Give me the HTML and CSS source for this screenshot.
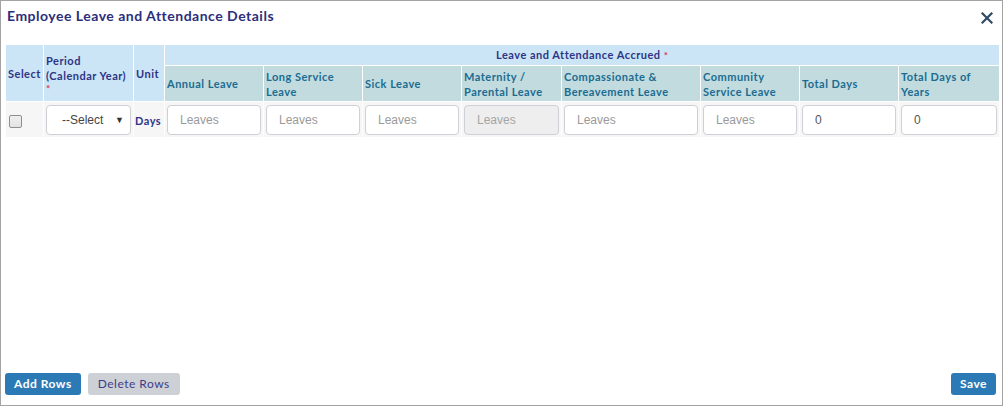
FILE: index.html
```html
<!DOCTYPE html>
<html lang="en">
<head>
<meta charset="utf-8">
<title>Employee Leave and Attendance Details</title>
<link rel="stylesheet" href="styles.css">
</head>
<body>
<div class="modal">
  <div class="modal-header">
    <h1 class="modal-title">Employee Leave and Attendance Details</h1>
    <button class="close" type="button" aria-label="Close">
      <svg width="12" height="12" viewBox="0 0 12 12"><path d="M1.5 1.5 L10.5 10.5 M10.5 1.5 L1.5 10.5" stroke="#2f4b63" stroke-width="2.2" stroke-linecap="square" fill="none"/></svg>
    </button>
  </div>
  <div class="modal-body">
    <table class="grid">
      <colgroup>
        <col class="c-select"><col class="c-period"><col class="c-unit">
        <col class="c-std"><col class="c-std"><col class="c-std"><col class="c-mat">
        <col class="c-comp"><col class="c-std"><col class="c-std"><col class="c-last">
      </colgroup>
      <thead>
        <tr class="head-top">
          <th rowspan="2" class="th-main">Select</th>
          <th rowspan="2" class="th-main">Period<br>(Calendar Year) <span class="req req-block">*</span></th>
          <th rowspan="2" class="th-main">Unit</th>
          <th colspan="8" class="th-main th-group">Leave and Attendance Accrued <span class="req">*</span></th>
        </tr>
        <tr class="head-sub">
          <th>Annual Leave</th>
          <th>Long Service Leave</th>
          <th>Sick Leave</th>
          <th>Maternity / Parental Leave</th>
          <th>Compassionate &amp; Bereavement Leave</th>
          <th>Community Service Leave</th>
          <th>Total Days</th>
          <th>Total Days of Years</th>
        </tr>
      </thead>
      <tbody>
        <tr class="data-row">
          <td class="td-check"><input type="checkbox" class="check"></td>
          <td><div class="select"><span>--Select</span><span class="arrow">&#9660;</span></div></td>
          <td class="td-unit">Days</td>
          <td><input class="field" placeholder="Leaves"></td>
          <td><input class="field" placeholder="Leaves"></td>
          <td><input class="field" placeholder="Leaves"></td>
          <td><input class="field field-disabled" placeholder="Leaves" disabled></td>
          <td><input class="field" placeholder="Leaves"></td>
          <td><input class="field" placeholder="Leaves"></td>
          <td><input class="field" value="0"></td>
          <td><input class="field" value="0"></td>
        </tr>
      </tbody>
    </table>
  </div>
  <div class="modal-footer">
    <div class="actions-left">
      <button class="btn btn-primary" type="button">Add Rows</button>
      <button class="btn btn-muted" type="button">Delete Rows</button>
    </div>
    <button class="btn btn-primary" type="button">Save</button>
  </div>
</div>
</body>
</html>
```

FILE: styles.css
```css
* { box-sizing: border-box; }
html, body { margin: 0; padding: 0; }
body {
  font-family: Lato, "Open Sans", Arial, sans-serif;
  background: #fff;
}
.modal {
  width: 1003px;
  height: 406px;
  border: 1px solid #a3a3a3;
  display: flex;
  flex-direction: column;
  background: #fff;
}
.modal-header {
  display: flex;
  justify-content: space-between;
  align-items: flex-start;
  padding: 5px 9px 0 6px;
  height: 43px;
}
.modal-title {
  margin: 0;
  font-size: 14px;
  line-height: 20px;
  font-weight: 700;
  color: #2c2e7c;
  letter-spacing: 0.5px;
}
.close {
  border: 0;
  background: none;
  padding: 0;
  margin-top: 6px;
  width: 12px;
  height: 12px;
  display: flex;
}
.modal-body {
  padding: 0 3px 0 4px;
  flex: 1;
}
.grid {
  width: 994px;
  table-layout: fixed;
  border-collapse: collapse;
}
.c-select { width: 38px; }
.c-period { width: 90px; }
.c-unit { width: 31px; }
.c-std { width: 99px; }
.c-mat { width: 100px; }
.c-comp { width: 139px; }
.c-last { width: 101px; }
.grid th, .grid td {
  border: 1px solid #fff;
  padding: 0 2px;
}
.grid th {
  font-size: 11px;
  line-height: 15px;
  font-weight: 700;
  text-align: left;
  vertical-align: middle;
  letter-spacing: 0.5px;
}
.head-top th { background: #cbe5f6; color: #2e3486; }
.head-top { height: 21px; }
.th-group { text-align: center !important; }
.head-sub th { background: #c1dbdf; color: #1b6c90; height: 36px; }
.req { color: #e0334b; font-size: 10px; letter-spacing: 0; }
.req-block { display: block; line-height: 10px; }
.data-row td {
  background: #f6f6f6;
  height: 36px;
  padding: 3px 2px 2px 2px;
  vertical-align: middle;
}
.td-check { padding-left: 2px !important; }
.check {
  appearance: none;
  -webkit-appearance: none;
  margin: 2px 0 0 1px;
  width: 13px;
  height: 13px;
  border: 1px solid #8f8f8f;
  border-radius: 2px;
  background: linear-gradient(#f0f0f0, #e2e2e2);
  display: block;
}
.td-unit {
  font-size: 11px;
  font-weight: 700;
  color: #2e3486;
  letter-spacing: 0.5px;
  padding-left: 1px !important;
}
.field, .select {
  width: 100%;
  height: 30px;
  border: 1px solid #cfcfd6;
  border-radius: 4px;
  background: #fff;
  font-family: "Liberation Sans", Arial, sans-serif;
  font-size: 12px;
  color: #555;
  padding: 0 12px;
  display: block;
}
.field::placeholder { color: #9a9a9a; }
.field-disabled { background: #eeeeee; }
.field-disabled::placeholder { color: #a5a5a5; }
.select {
  display: flex;
  align-items: center;
  justify-content: space-between;
  padding: 0 6px 0 15px;
  color: #444;
}
.arrow { font-size: 9px; color: #333; }
.modal-footer {
  display: flex;
  justify-content: space-between;
  align-items: center;
  padding: 0 6px 10px 4px;
}
.actions-left { display: flex; gap: 7px; }
.btn {
  height: 22px;
  border: 0;
  border-radius: 3px;
  font-family: Lato, Arial, sans-serif;
  font-size: 12px;
  padding: 0 9px;
  line-height: 22px;
  letter-spacing: 0.5px;
}
.btn-primary { background: #2b7ab6; color: #fff; font-weight: 700; }
.btn-muted { background: #cdd0d5; color: #3c3d8a; font-weight: 400; padding: 0 10px; }
```
